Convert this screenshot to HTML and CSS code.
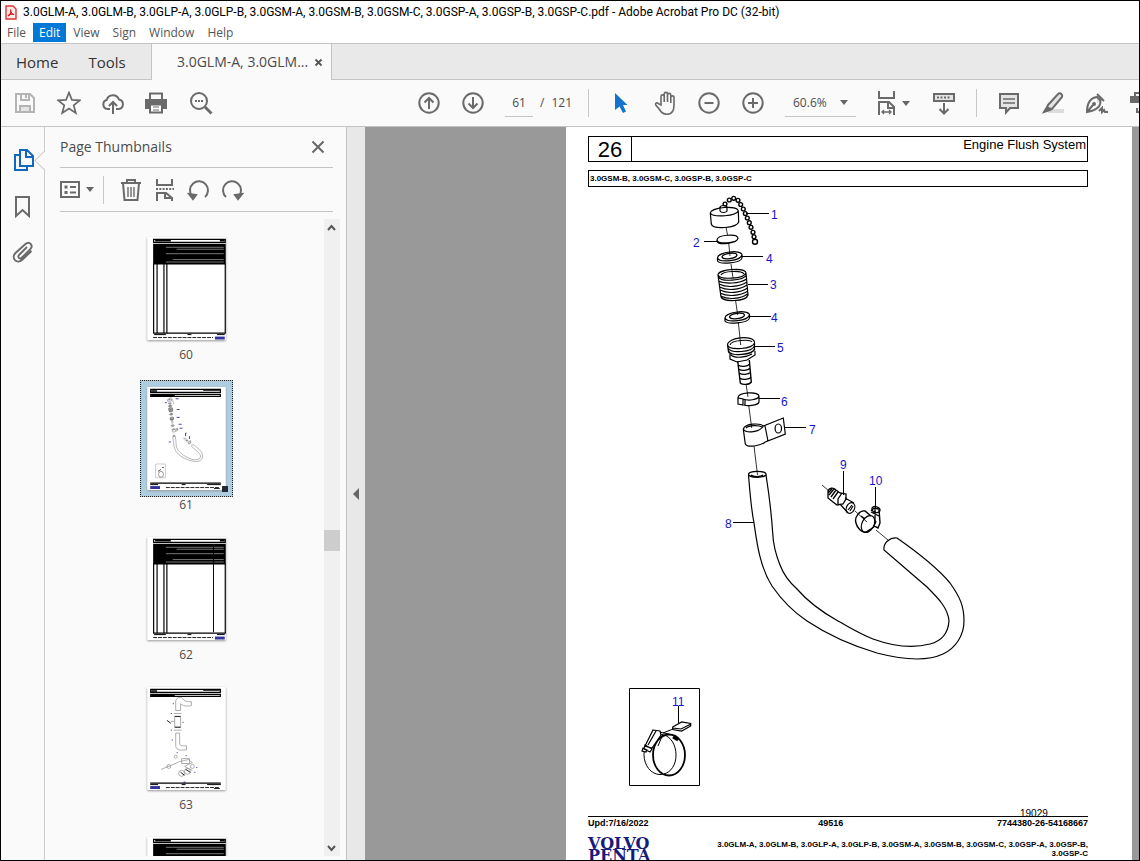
FILE: index.html
```html
<!DOCTYPE html>
<html lang="en">
<head>
<meta charset="utf-8">
<title>Adobe Acrobat Pro DC</title>
<link rel="stylesheet" href="styles.css">
</head>
<body>
<header class="titlebar">
  <svg class="app-icon" width="12" height="15" viewBox="0 0 12 15"><path d="M1 1h7l3 3v10H1z" fill="#fde9e9" stroke="#d33" stroke-width="1.4"/><path d="M3 11c2-1 3-4 2.600-6.500M5.600 5c.4 3 2 4.500 3.600 4.500M3 10.500c2-1.500 4-1.500 6-1" fill="none" stroke="#c11" stroke-width="1.100"/></svg>
  <span>3.0GLM-A, 3.0GLM-B, 3.0GLP-A, 3.0GLP-B, 3.0GSM-A, 3.0GSM-B, 3.0GSM-C, 3.0GSP-A, 3.0GSP-B, 3.0GSP-C.pdf - Adobe Acrobat Pro DC (32-bit)</span>
</header>
<nav class="menubar">
  <button>File</button><button class="active">Edit</button><button>View</button><button>Sign</button><button>Window</button><button>Help</button>
</nav>
<nav class="tabs">
  <div class="main-tabs"><button>Home</button><button>Tools</button></div>
  <div class="doc-tab"><button>3.0GLM-A, 3.0GLM...</button><button class="tab-close" aria-label="Close tab"><svg width="9" height="9" viewBox="0 0 9 9"><path d="M1.500 1.500l6 6M7.500 1.500l-6 6" stroke="#555" stroke-width="1.800"/></svg></button></div>
  <div class="tab-rest"></div>
</nav>
<div class="toolbar">
  <div class="tools tools-file">
    <button aria-label="Save" disabled><svg class="ic pale" viewBox="0 0 24 24"><path d="M3 3h14l4 4v14H3z"/><path d="M8 3v6h8V3M13 4v3"/><path d="M7 21v-6h10v6z" fill="#e4e4e4"/></svg></button>
    <button aria-label="Add to favourites"><svg class="ic" viewBox="0 0 24 24"><path d="M12 1.500l2.900 7.400 7.900.4-6.100 5 2.100 7.700-6.800-4.400L5.200 22l2.100-7.700-6.100-5 7.900-.4z" stroke-width="1.700"/></svg></button>
    <button aria-label="Upload"><svg class="ic" viewBox="0 0 24 24"><path d="M9 18H6.500a4.600 4.600 0 0 1-.8-9A6.500 6.500 0 0 1 18 8.500 4.800 4.800 0 0 1 17.500 18H15M12 23V11M8 15l4-4 4 4"/></svg></button>
    <button aria-label="Print"><svg class="ic" viewBox="0 0 24 24"><path d="M5 8V2.500h12V8"/><path d="M1 9h20v8H1z" class="fill"/><path d="M5 13.500h12v8H5z" fill="#fff"/><path d="M8 16h6M8 19h6" stroke-width="1.200"/></svg></button>
    <button aria-label="Find"><svg class="ic" viewBox="0 0 24 24"><circle cx="10" cy="10" r="8"/><path d="M16 16l6.500 6.500" stroke-width="2.800"/><path d="M6 10h2M9 10h2M12 10h2"/></svg></button>
  </div>
  <div class="tools">
    <button aria-label="Previous page"><svg class="ic" viewBox="0 0 24 24"><circle cx="12" cy="12" r="9.700"/><path d="M12 18V7M7.500 11.500L12 7l4.500 4.500"/></svg></button>
    <button aria-label="Next page"><svg class="ic" viewBox="0 0 24 24"><circle cx="12" cy="12" r="9.700"/><path d="M12 6v11M7.500 12.500L12 17l4.500-4.500"/></svg></button>
  </div>
  <div class="pager"><input type="text" value="61" aria-label="Page number"><span>/</span><span>121</span></div>
  <span class="divider"></span>
  <div class="tools">
    <button aria-label="Select"><svg class="ic" viewBox="0 0 24 24"><path d="M6 2v17l4.500-3.500 3.500 6.500 3-1.500-3-6.500h4.500z" fill="#1473d0" stroke="none"/></svg></button>
    <button aria-label="Pan"><svg class="ic" viewBox="0 0 24 24"><path d="M7 14V5.500a1.600 1.600 0 0 1 3.200 0V11 3a1.600 1.600 0 0 1 3.300 0v8V4a1.600 1.600 0 0 1 3.300 0v8V6.500a1.600 1.600 0 0 1 3.200 0V14c0 6-2 9.300-7 9.300-4 0-5.500-1.300-7.500-4.800L1.800 14c-.8-2 1.400-2.900 2.600-1.400z" transform="translate(1 0)" stroke-width="1.600"/></svg></button>
    <button aria-label="Zoom out"><svg class="ic" viewBox="0 0 24 24"><circle cx="12" cy="12" r="9.700"/><path d="M7.500 12h9"/></svg></button>
    <button aria-label="Zoom in"><svg class="ic" viewBox="0 0 24 24"><circle cx="12" cy="12" r="9.700"/><path d="M7 12h10M12 7v10"/></svg></button>
  </div>
  <button class="zoom"><span>60.6%</span><svg width="8" height="5" viewBox="0 0 8 5"><path d="M0 0h8L4 5z" fill="#666"/></svg></button>
  <button class="fit" aria-label="Fit width"><svg class="ic" viewBox="0 0 24 24"><path d="M4 0v7h15V0M4 24V11h10l5 5v8M13 11v6h6" /><path d="M7 21h9M9 19l-2 2 2 2M14 19l2 2-2 2" stroke-width="1.300"/></svg><svg width="8" height="5" viewBox="0 0 8 5"><path d="M0 0h8L4 5z" fill="#666"/></svg></button>
  <div class="tools"><button aria-label="Scroll mode"><svg class="ic" viewBox="0 0 24 24"><path d="M2 3h20v7H2z" fill="#e4e4e4"/><path d="M5 6.500h14" stroke-dasharray="2 1.500"/><path d="M12 12v10M7.500 18l4.500 4.500 4.500-4.500"/></svg></button></div>
  <span class="divider"></span>
  <div class="tools">
    <button aria-label="Comment"><svg class="ic" viewBox="0 0 24 24"><path d="M3 3h18v14h-8l-4 4.500V17H3z" fill="#e4e4e4"/><path d="M6 8h12M6 12h12" stroke-width="1.500"/></svg></button>
    <button aria-label="Highlight"><svg class="ic" viewBox="0 0 24 24"><path d="M9 18h14v4H7z" fill="#dcdcdc" stroke="none"/><path d="M7 14L17.500 2.500c2-1 4.500 1 3.500 3.500L11 18l-5-1z" fill="#e4e4e4"/><path d="M6 16l3 3-6 2z" class="fill"/></svg></button>
    <button aria-label="Sign"><svg class="ic" viewBox="0 0 24 24"><path d="M12 3l6 6-6 3z" fill="#ddd" stroke="none"/><path d="M12 3l7 7M15 8.500c2 7-4 11-13 12.500C2 13 5 7 12 6l4 4M2 21l6-7M14 20l3-3v4l2-2 1 2h3"/><circle cx="9" cy="13" r="1" class="fill"/></svg></button>
    <button aria-label="Stamp"><svg class="ic" viewBox="0 0 24 24"><path d="M6 7V2h14v19H8v-4"/><path d="M2 6h9v5H2z" class="fill"/></svg></button>
  </div>
</div>
<main class="workspace">
  <nav class="rail">
    <button class="on" aria-label="Page thumbnails"><svg class="ic" viewBox="0 0 24 24"><path d="M9 2h7l6 6v10H9zM15 2v7h7M9 7H4v15h12v-4"/></svg></button>
    <button aria-label="Bookmarks"><svg class="ic" viewBox="0 0 24 24"><path d="M5 3h13v19l-6.500-6L5 22z"/></svg></button>
    <button aria-label="Attachments"><svg class="ic" viewBox="0 0 24 24"><path d="M16 7l-8 8c-2 2.500 1 4.500 3 2.500l8.500-8.500c3-3.500-1-8.500-5-5L4.500 13c-5 5 1.500 11.500 6.500 7L20.500 11" stroke-width="1.900"/></svg></button>
  </nav>
  <section class="panel">
    <div class="panel-head"><h2>Page Thumbnails</h2><button aria-label="Close panel"><svg width="14" height="14" viewBox="0 0 14 14"><path d="M1.500 1.500l11 11M12.500 1.500l-11 11" stroke="#666" stroke-width="2"/></svg></button></div>
    <div class="panel-tools">
      <button class="options" aria-label="Options"><svg width="20" height="24" viewBox="0 0 20 24" class="line"><path d="M1 4h18v15H1z"/><path d="M4.500 9h3M4.500 14.500h3" stroke-width="3"/><path d="M10 9h6M10 14.500h6"/></svg><svg width="8" height="5" viewBox="0 0 8 5"><path d="M0 0h8L4 5z" fill="#666"/></svg></button>
      <span class="divider"></span>
      <button aria-label="Delete"><svg class="ic" viewBox="0 0 24 24"><path d="M2 5h20M8 5V2h8v3M4 5l1.500 17h13L20 5"/><path d="M9 9v10M12 9v10M15 9v10" stroke-width="1.400"/></svg></button>
      <button aria-label="Split"><svg class="ic" viewBox="0 0 24 24"><path d="M4 1v6h15V1M4 23v-8h9l6 5v3M12 15v5h7"/><path d="M3 11h18" stroke-dasharray="2 1.300"/></svg></button>
      <button aria-label="Rotate left"><svg class="ic" viewBox="0 0 24 24"><path d="M5 18A9 9 0 1 1 18 19"/><path d="M2 16l7 1-3 4z" class="fill"/></svg></button>
      <button aria-label="Rotate right"><svg class="ic" viewBox="0 0 24 24"><path d="M18 18A9 9 0 1 0 5 19"/><path d="M21 16l-7 1 3 4z" class="fill"/></svg></button>
    </div>
    <div class="thumb-area">
      <div class="thumbs">
        <button class="thumb"><svg viewBox="0 0 80 105"><use href="#parts-table"/></svg><span>60</span></button>
        <button class="thumb selected"><svg viewBox="0 0 80 105"><use href="#sheet"/>
          <use href="#flush" class="mini" transform="translate(-79.500 -17) scale(.141)"/>
          <path d="M29 12h3M18 16h2M30 23h3M30 31h3M32 38h3M33 42h3M39 47h1M22 56h2M39 47v3M43 50v3" stroke="#44a"/><path d="M8.500 78.500h10v14h-10z" fill="none" stroke="#999" stroke-width=".5"/><ellipse cx="14" cy="89" rx="2.500" ry="3" fill="none" stroke="#555" stroke-width=".6"/><path d="M11 86l3-2M15 82h2" stroke="#555"/></svg><span>61</span><i class="mark"></i></button>
        <button class="thumb"><svg viewBox="0 0 80 105"><use href="#parts-table"/><path d="M67.500 10v87" stroke="#000"/></svg><span>62</span></button>
        <button class="thumb"><svg viewBox="0 0 80 105"><use href="#sheet"/>
          <g fill="none" stroke="#888" stroke-width=".7"><path d="M29 24V15c0-5 6-6 8-2 2 2 4 2 8 2v4c-6 1-9 0-11-2v7zM28 30h6v11h-6zM29 47h4v10c0 3 2 3 7 3v4c-8 1-11 0-11-5z"/><path d="M27 27h8M27 44h8M24 35h4M14 84l10-4 9-4 9-2 4 3-8 4 8 4M35 73h8v5h-8z"/><circle cx="22" cy="81" r="2"/><circle cx="35" cy="88" r="3"/><circle cx="41" cy="86" r="3"/><circle cx="46" cy="81" r="2"/><circle cx="29" cy="71" r="1.500"/></g>
          <path d="M28 30h6M20 34l4 3M28 41h6M34 87l4 3M39 84l5 3" stroke="#222"/><path d="M26 17h1M24 27h1M36 36h1M24 44h1M25 54h1M30 67h1M39 70h1M50 82h1M48 87h1M37 97h2" stroke="#22a"/></svg><span>63</span></button>
        <button class="thumb"><svg viewBox="0 0 80 105"><use href="#parts-table"/></svg></button>
      </div>
      <div class="scroll"><svg width="15" height="17" viewBox="0 0 15 17"><path d="M4 11l3.500-4L11 11" fill="none" stroke="#555" stroke-width="2"/></svg><i class="above"></i><i class="grip"></i><i class="below"></i><svg width="15" height="17" viewBox="0 0 15 17"><path d="M4 7l3.500 4L11 7" fill="none" stroke="#555" stroke-width="2"/></svg></div>
    </div>
  </section>
  <button class="gutter" aria-label="Collapse panel"><svg width="6" height="12" viewBox="0 0 6 12"><path d="M6 0v12L0 6z" fill="#666"/></svg></button>
  <section class="document">
    <article class="page">
      <div class="chapter"><b>26</b><span>Engine Flush System</span></div>
      <div class="models">3.0GSM-B, 3.0GSM-C, 3.0GSP-B, 3.0GSP-C</div>
      <svg class="figure" viewBox="588 187 500 629">
        <defs>
          <g id="sheet"><path d="M0 0h80v105H0z" fill="#fff"/><path d="M3.500 2.500h71v3h-71zM3.500 7.500h71v2h-71z" fill="none" stroke="#000" stroke-width="1.200"/><path d="M4 4h6M57 3h17M4 8.500h24" stroke="#000" stroke-width="1.500"/><path d="M3 98h72" stroke="#000" stroke-width="1.400"/><path d="M3 99.500h8M35 99.500h4M61 99.500h14" stroke="#000"/><path d="M19 102.500h55" stroke="#222" stroke-dasharray="4 1"/><path d="M68 103.500h6" stroke="#222"/><path d="M3 102.500h10" stroke="#339" stroke-width="3"/></g>
          <g id="parts-table"><path d="M0 0h80v105H0z" fill="#fff"/><path d="M6.500 2.500h73v3h-73z" fill="none" stroke="#000" stroke-width="1.200"/><path d="M8 3.500h16M74 3.500h5" stroke="#000" stroke-width="2"/><path d="M6 7h74v21H6z"/><path d="M19 10.500h59M30 12.500h48M19 17h59M26 23h52M19 25.500h59" stroke="#aaa" stroke-width=".7"/><path d="M6.500 27v71h73V27M10 27v71M17 27v71M20 27v71" fill="none" stroke="#000" stroke-width="1.200"/><path d="M7 99.500h12M41 99.500h4M71 99.500h8" stroke="#000"/><path d="M6 102.500h61" stroke="#222" stroke-dasharray="4 1"/><path d="M69 103h10" stroke="#339" stroke-width="3"/></g>
          <g id="flush" fill="none">
            <path d="M726 227l1.500 8M728.700 243l1.300 13M731 264l2 14M735.500 300l2.200 15M738.300 322l2.400 23M746 384l2 13M748.700 405l3 23M754 446l3.500 29M822 485l7 6M855 511l12 11M876 530l12 10" stroke-width=".8"/>
            <path d="M710.300 213c1-6 27-8 28-2l.4 11c-2 6-26 8-27.400 2zM710.300 213c3 5 26 3 28-2M720 211v-4c1-2 6-2 7 0v4c-1 2-6 2-7 0"/>
            <g fill="#fff" stroke-width="1.400"><circle cx="725" cy="204" r="1.900"/><circle cx="729.300" cy="200" r="1.900"/><circle cx="733.700" cy="198.300" r="1.900"/><circle cx="738" cy="200.300" r="1.900"/><circle cx="740.700" cy="204.500" r="1.900"/><circle cx="743.300" cy="209" r="1.900"/><circle cx="745.300" cy="213.500" r="1.900"/><circle cx="747.300" cy="218" r="1.900"/><circle cx="749.300" cy="222.700" r="1.900"/><circle cx="751" cy="227.300" r="1.900"/><circle cx="753" cy="232.300" r="1.900"/><circle cx="754" cy="236.800" r="1.900"/><circle cx="755" cy="241.700" r="2.500"/></g>
            <path d="M717 240c0-5 20-7 21-2 0 5-20 7-21 2zM717 240v1.500c2 4 20 2 21-3"/>
            <path d="M717.500 258c0-6 24-9 24.500-3v3c-1 5-22 7-24.500 3zM717.500 258c2 5 23 3 24.500-3M722 257c1-4 14-5 15-2-1 4-14 5-15 2z"/>
            <path d="M725 318c0-6 24-9 24.500-3v3c-1 5-22 7-24.500 3zM725 318c2 5 23 3 24.500-3M729.500 317c1-4 14-5 15-2-1 4-14 5-15 2z"/>
            <path d="M718 275c0-6 27-8 28-2l2 22c-2 7-25 7-27 2zM718 275c2 5 26 4 28-2M718.500 277c2 5 25 4 28-2M721 275c2-4 20-5 23-1M718.500 281c6 3 21 3 28-2M719 284c8 4 20 3 28-2M719.500 287c8 4 20 3 27.500-2M720 290c8 4 20 3 27.500-2M720 293c8 4 20 3 28-2M720.500 296c8 4 20 3 27-2"/>
            <path d="M727.500 345c0-8 26-10 27-3v7c-2 6-24 7-26 3zM727.500 345c2 6 25 4 27-2M730 345c1-5 20-6 22-3M728 348c3 6 24 4 26.500-2M728.500 351c3 6 24 4 26.500-2M730 354v5l7 3 10-2 8-5v-4M731 355c4 4 16 2 21-1"/>
            <path d="M737.700 361l2.600 22c2 2 9 2 11-1l-2-22M738 365c3 2 9 2 12-1M738.500 369c3 2 9 2 12-1M739 373c3 2 9 2 12-1M739.500 378c3 2 9 2 12-1" stroke-width="1.400"/>
            <path d="M738 398c0-6 20-7 21-2v6c-1 4-13 4-15 3M738 398v6l5 1v-6zM743 399c5 2 15 1 16-3M745 400v5"/>
            <path d="M743.300 429c2-6 17-6 20-3l20-8 2 16-20 8c-5 4-18 6-20 2zM743.300 429c3 5 17 3 20-3M746 428c3-3 13-3 16-1M765 426l3 15"/><ellipse cx="778.300" cy="428.500" rx="3.200" ry="4.500"/>
            <ellipse cx="757.300" cy="474.300" rx="8.800" ry="3"/><path d="M751 475c2 2 10 2 12 0"/>
            <path d="M748.500 475C750 493 751 508 754 523C757 544 760 567 772 586C783 602 795 613 807 621C828 635 850 645 877 653C900 659 926 662 943 654C956 648 964 635 964 621C964 606 960 597 950 583C936 566 917 552 897 538C890 537 883 543 884 550L927 587C938 598 948 608 949 621C948 634 942 641 930 644C915 648 895 647 873 639C860 634 849 627 838 621C822 612 809 603 797 589C788 581 783 573 780 565C774 550 773 540 772.700 533C771.500 515 770 500 766 475"/>
            <path d="M828 491c1-3 5-4 8-1l4 3 6 1v5l-3 5-6 1-4-3-5-4zM829 495l5-6M831 497l5-7M833 499l5-7M838 504v-5l4-6M840 504l8 9M845 498l9 5M828 493l4-4" stroke-width="1.300"/><ellipse cx="850.500" cy="508" rx="4" ry="5.500" transform="rotate(25 850.500 508)"/><path d="M848 510l4-5M850 511l3-5"/>
            <ellipse cx="868" cy="524" rx="6" ry="9" transform="rotate(28 868 524)"/><path d="M871 516l-6-5c-5-1-11 6-9 12 1 5 6 10 10 9l8-5M861 516l4 3M871 511l3-3 5 1 1 14-2 5-4-2 2-5" stroke-width="1.400"/><path d="M871 512l8 4M875 509v15M872 508c2-3 8-1 8 2s-6 4-8 0z" stroke-width="1.300"/>
          </g>
        </defs>
        <use href="#flush" class="drawing"/>
        <path d="M746 213.500h23M704 241.500h13M742 256.500h21M748 284.500h20M750 316.500h21M755 346.500h20M759 398.500h21M785 427.500h21M733 522.500h21M843.500 471v24M875.500 487v21M678.500 706v17" stroke="#000"/>
        <g class="callouts"><text x="771" y="219">1</text><text x="693" y="247">2</text><text x="766" y="263">4</text><text x="770" y="289">3</text><text x="771" y="322">4</text><text x="777" y="352">5</text><text x="781" y="406">6</text><text x="809" y="434">7</text><text x="725" y="528">8</text><text x="840" y="469">9</text><text x="869" y="485">10</text><text x="672" y="706">11</text></g>
        <g fill="none" stroke="#000"><path d="M629.500 688.500h70v97h-70z"/><ellipse cx="660" cy="754.500" rx="16" ry="20"/><ellipse cx="669" cy="755" rx="16" ry="20.500" fill="#fff" stroke-width="1.800"/><path d="M664 735c7 2 12 10 12 20s-5 17-12 19M663 734l-5 12M659 732l10 2M663 733l10-4"/><path d="M653 730l7 1 1 4-9 13-7-2zM645 745l7 4-2 3-6-3zM643 748l4 2-1 2-4-1zM672.700 727l9-5 9 1.500v2.500l-9 5-9-1.500zM673 728l8 1 10-5M656 731l-8 14" fill="#fff" stroke-width="1.200"/><path d="M673 737l5 3" stroke-width="3"/></g>
        <text class="fig-no" x="1020" y="817">19029</text>
      </svg>
      <footer class="page-foot">
        <div class="foot-row"><span>Upd:7/16/2022</span><span>49516</span><span>7744380-26-54168667</span></div>
        <div class="foot-brand"><div class="logo">VOLVO<br>PENTA</div><p>3.0GLM-A, 3.0GLM-B, 3.0GLP-A, 3.0GLP-B, 3.0GSM-A, 3.0GSM-B, 3.0GSM-C, 3.0GSP-A, 3.0GSP-B, 3.0GSP-C</p></div>
      </footer>
    </article>
  </section>
</main>
</body>
</html>
```
FILE: styles.css
```css
* { box-sizing: border-box; }
body {
  margin: 0;
  height: 100vh;
  display: flex;
  flex-direction: column;
  overflow: hidden;
  border: 1px solid #000;
  background: #fafafa;
  color: #4b4b4b;
  font: 12px/16px "Open Sans", "Noto Sans", sans-serif;
}
button { border: 0; margin: 0; padding: 0; background: none; color: inherit; font: inherit; display: flex; align-items: center; justify-content: center; flex: none; }
svg { display: block; flex: none; }
.ic { width: 24px; height: 24px; }
.ic, .line { fill: none; stroke: #6a6a6a; stroke-width: 2; }
.ic .fill { fill: #6a6a6a; }
.pale { stroke: #b4b4b4; }

.titlebar { display: flex; align-items: center; gap: 6px; height: 22px; padding-left: 4px; background: #fff; color: #000; font-family: Roboto, sans-serif; white-space: nowrap; }
.menubar { display: flex; gap: 1px; height: 20px; background: #fff; color: #555; }
.menubar button { padding: 0 6px; height: 19px; }
.menubar .active { background: #0078d7; color: #fff; }

.tabs { display: flex; height: 37px; border-top: 1px solid #c4c4c4; font-size: 14px; }
.main-tabs, .tab-rest { background: #e9e9e9; border-bottom: 1px solid #c4c4c4; }
.main-tabs { display: flex; gap: 30px; width: 151px; padding-left: 15px; border-right: 1px solid #c4c4c4; font-size: 15px; color: #333; }
.doc-tab { display: flex; align-items: center; gap: 6px; width: 180px; padding-left: 25px; border-right: 1px solid #c4c4c4; white-space: nowrap; }
.tab-rest { flex: 1; }

.toolbar { display: flex; align-items: center; height: 47px; overflow: hidden; border-bottom: 1px solid #c4c4c4; }
.tools { display: flex; flex: none; }
.tools button { width: 44px; height: 40px; }
.tools-file { margin-left: 2px; margin-right: 184px; }
.divider { flex: none; width: 1px; height: 28px; margin: 0 10px; background: #c8c8c8; }
.pager { display: flex; flex: none; align-items: center; gap: 7px; width: 83px; padding-left: 10px; }
.pager input { flex: none; width: 28px; height: 28px; padding: 0; border: 0; border-bottom: 1px solid #c4c4c4; background: none; color: inherit; font: inherit; text-align: center; }
.zoom { justify-content: space-between; width: 71px; height: 28px; margin-left: 10px; padding: 0 8px; border-bottom: 1px solid #c4c4c4; }
.fit { width: 40px; gap: 3px; margin: 0 10px 0 16px; }

.workspace { display: flex; flex: 1; min-height: 0; }
.rail { flex: none; width: 44px; padding-top: 10px; border-right: 1px solid #ccc; }
.rail button { position: relative; width: 43px; height: 46px; }
.rail .on .ic { stroke: #1268c0; }
.rail .on::after { content: ""; position: absolute; right: -6px; top: 17px; width: 12px; height: 12px; border-left: 1px solid #ccc; border-bottom: 1px solid #ccc; background: #fafafa; transform: rotate(45deg); }

.panel { display: flex; flex-direction: column; flex: none; width: 302px; border-right: 1px solid #c4c4c4; }
.panel-head, .panel-tools { display: flex; align-items: center; flex: none; margin: 0 13px 0 15px; border-bottom: 1px solid #c4c4c4; }
.panel-head { justify-content: space-between; height: 41px; padding-right: 8px; }
.panel-head h2 { margin: 0; font-size: 14px; font-weight: 400; }
.panel-tools { height: 44px; }
.panel-tools button { width: 34px; height: 34px; }
.panel-tools .options { gap: 6px; }
.panel-tools .divider { margin: 0 10px 0 9px; }
.thumb-area { display: flex; flex: 1; min-height: 0; margin: 7px 6px 4px 3px; }
.thumbs { display: flex; flex: 1; flex-direction: column; align-items: center; gap: 17px; overflow: hidden; padding-top: 11px; }
.thumb { position: relative; flex-direction: column; justify-content: flex-start; height: 133px; }
.thumb svg { width: 93px; height: 117px; padding: 6px; border: 1px solid transparent; filter: drop-shadow(0 1px 1px #999); }
.thumb span { line-height: 16px; }
.selected::before { content: ""; position: absolute; inset: 0 0 16px; background: #aecde0; border: 1px dotted #222; }
.selected svg, .selected span { position: relative; }
.mark { position: absolute; right: 5px; bottom: 21px; width: 6px; height: 6px; background: #222b38; }
.scroll { display: flex; flex-direction: column; flex: none; width: 16px; background: #f0f0f0; }
.above { flex: 101; }
.below { flex: 99; }
.grip { height: 21px; background: #cdcdcd; }
.gutter { width: 18px; background: #e8e8e8; }

.document { display: flex; flex: 1; align-items: flex-start; min-width: 0; overflow: hidden; padding: 0 7px 0 201px; background: #999; }
.page { flex: 1; padding: 9px 44px 40px 22px; background: #fff; color: #000; font: 9px/12px "Liberation Sans", Arial, sans-serif; }
.chapter { display: flex; height: 26px; border: 1px solid #000; }
.chapter b { width: 43px; border-right: 1px solid #000; font-size: 22px; line-height: 26px; font-weight: 400; text-align: center; }
.chapter span { flex: 1; padding-right: 1px; font-size: 13px; line-height: 15px; text-align: right; }
.models { height: 17px; margin-top: 8px; padding-left: 1px; border: 1px solid #000; font-size: 8px; font-weight: 700; line-height: 16px; }
.figure { width: 100%; height: auto; overflow: visible; }
.drawing { stroke: #000; stroke-width: 1.2px; }
.callouts { fill: #1414c8; font-size: 12px; }
.fig-no { font-size: 10px; }
.mini { stroke: #555; stroke-width: 3px; }
.page-foot { border-top: 1px solid #000; font-size: 8px; font-weight: 700; }
.foot-row { display: grid; grid-template-columns: auto 1fr auto; font-size: 9px; text-align: center; }
.foot-row span:nth-child(2) { padding-left: 16px; }
.foot-row + .foot-brand { display: flex; justify-content: space-between; margin-top: 9px; }
.foot-brand p { width: 402px; margin: 2px 0 0; line-height: 9px; text-align: right; }
.logo { color: #1a1a7a; font: 700 16px/12px "DejaVu Serif", serif; }
```
